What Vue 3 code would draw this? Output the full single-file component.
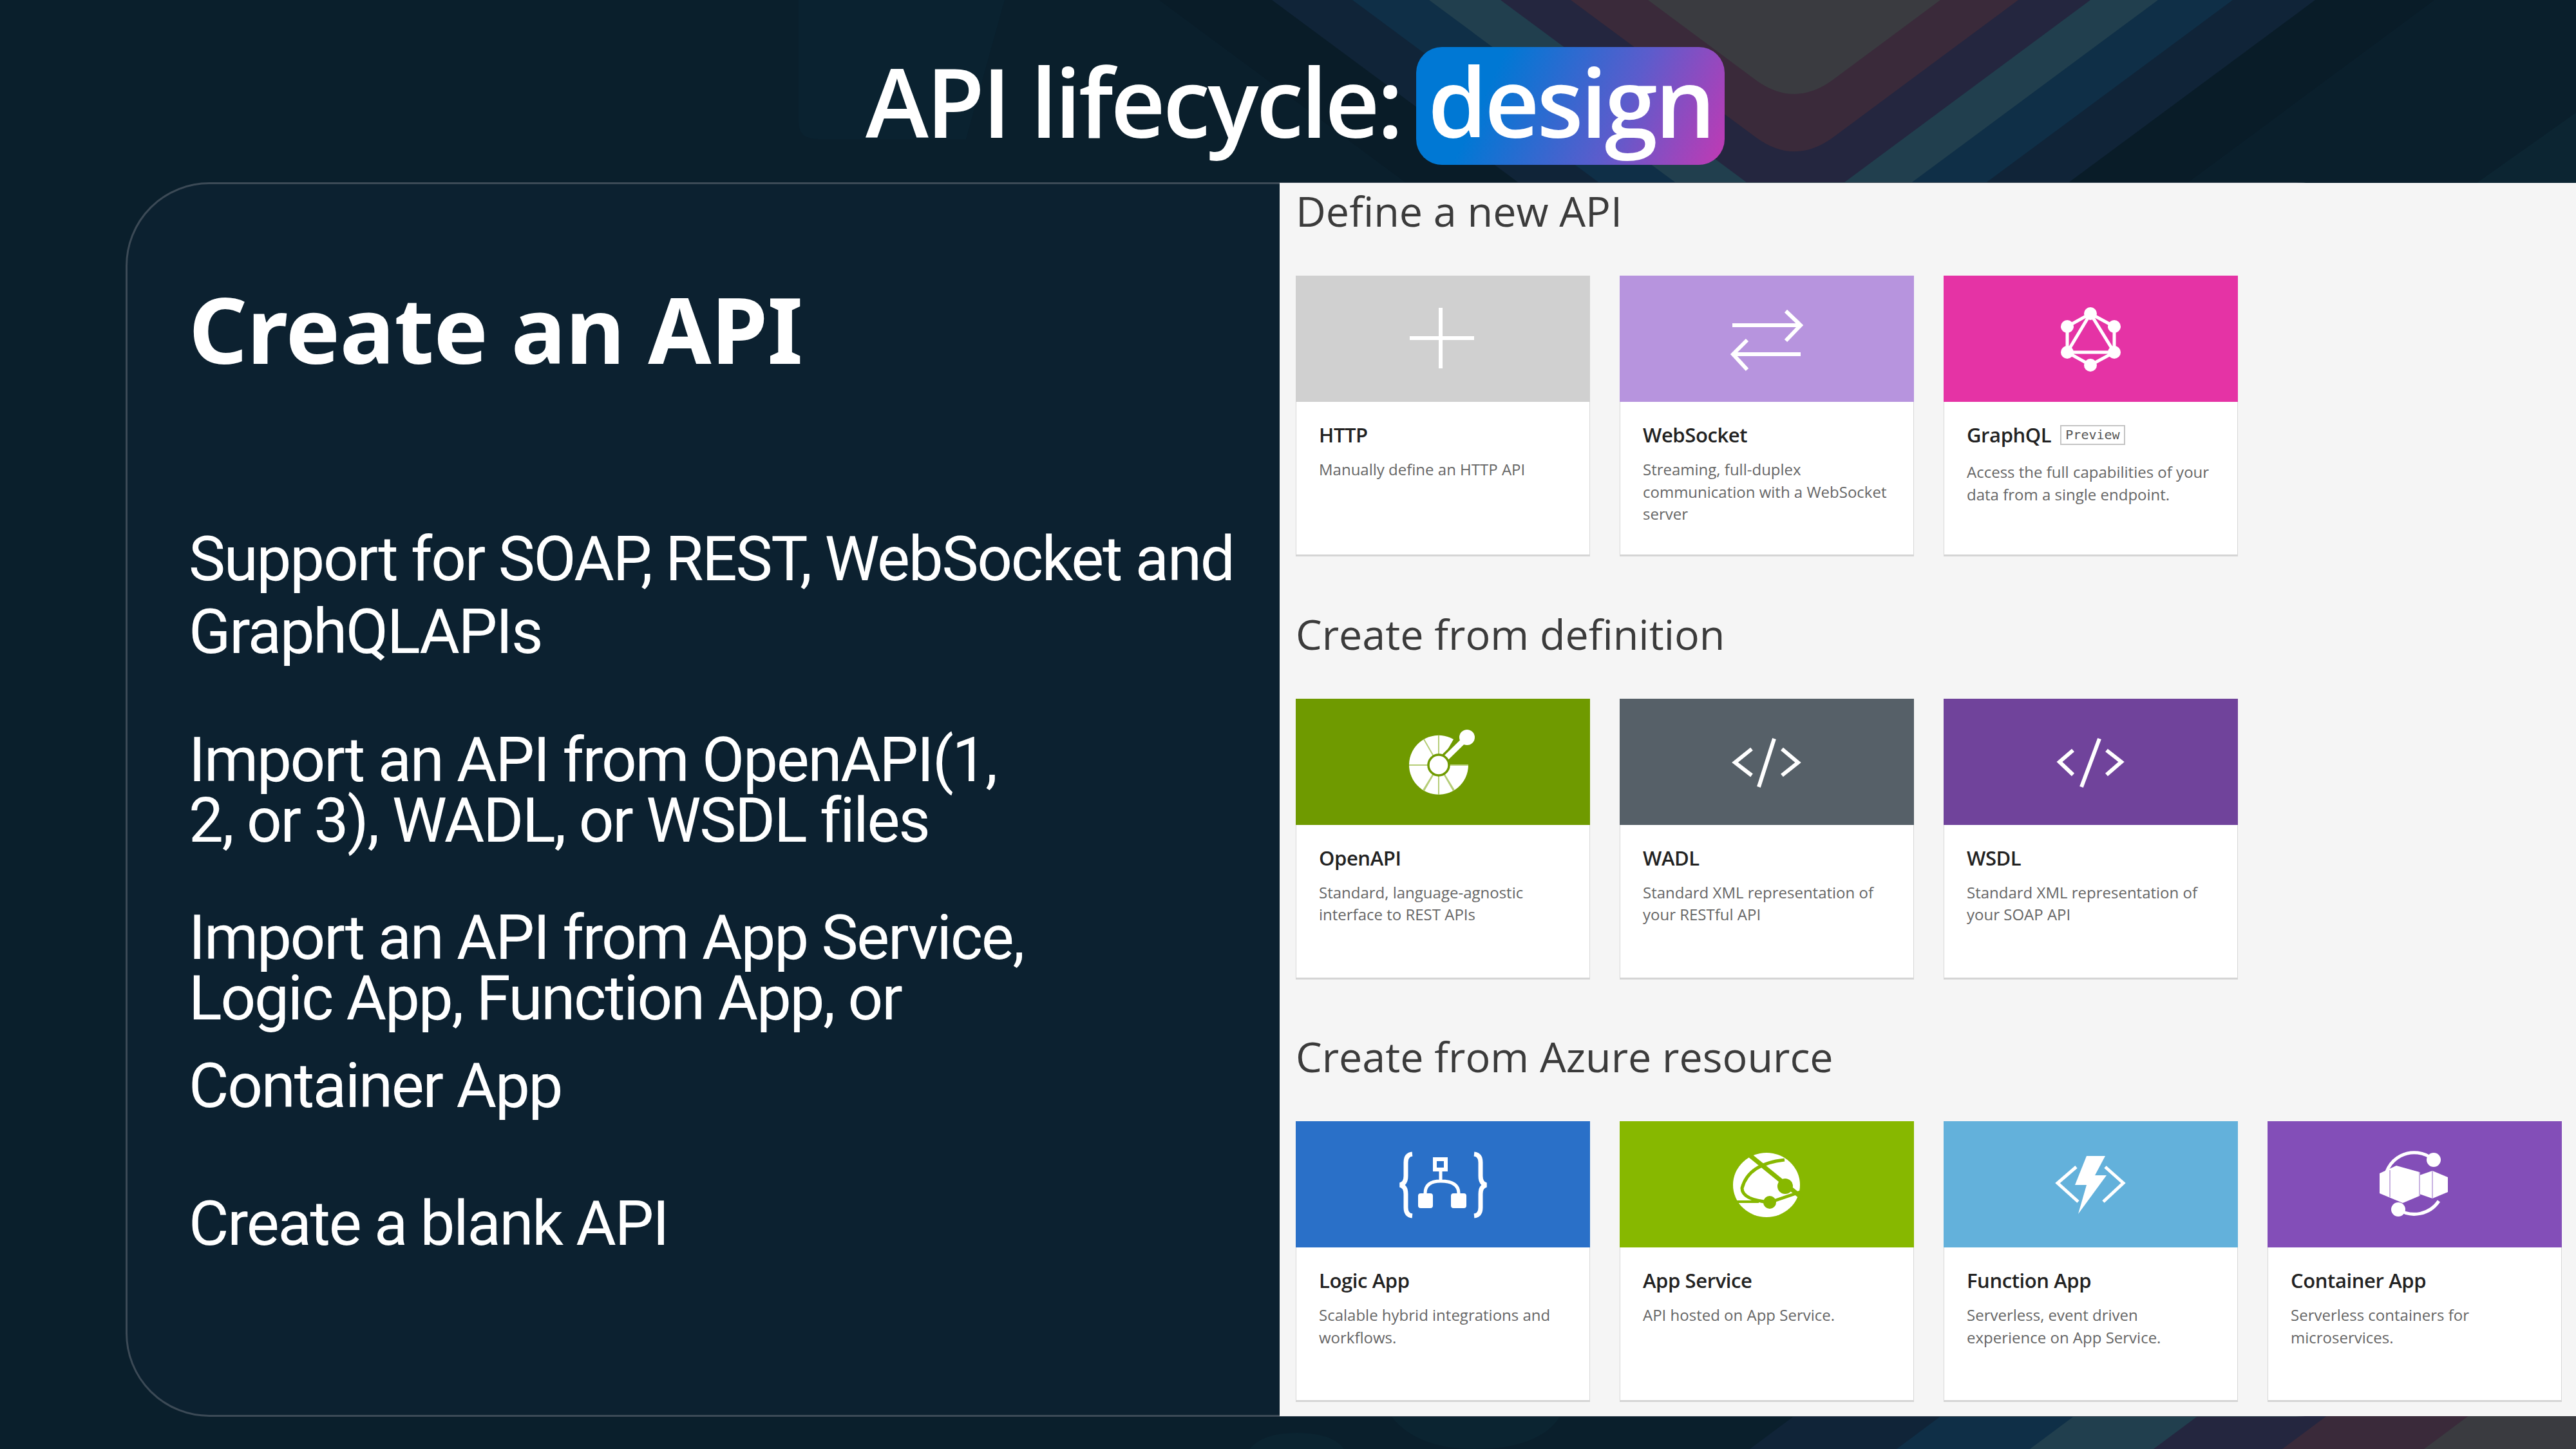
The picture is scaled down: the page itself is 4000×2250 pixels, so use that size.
<script setup>
const sections = [
  {
    title: 'Define a new API',
    cards: [
      { key: 'http', name: 'HTTP', color: '#d0d0d0', desc: 'Manually define an HTTP API' },
      { key: 'ws', name: 'WebSocket', color: '#b794de', desc: 'Streaming, full-duplex communication with a WebSocket server' },
      { key: 'graphql', name: 'GraphQL', color: '#e533a5', desc: 'Access the full capabilities of your data from a single endpoint.', badge: 'Preview' },
    ],
  },
  {
    title: 'Create from definition',
    cards: [
      { key: 'openapi', name: 'OpenAPI', color: '#6f9a00', desc: 'Standard, language-agnostic interface to REST APIs' },
      { key: 'wadl', name: 'WADL', color: '#566068', desc: 'Standard XML representation of your RESTful API' },
      { key: 'wsdl', name: 'WSDL', color: '#70439b', desc: 'Standard XML representation of your SOAP API' },
    ],
  },
  {
    title: 'Create from Azure resource',
    cards: [
      { key: 'logic', name: 'Logic App', color: '#2a70c8', desc: 'Scalable hybrid integrations and workflows.' },
      { key: 'appservice', name: 'App Service', color: '#87b800', desc: 'API hosted on App Service.' },
      { key: 'function', name: 'Function App', color: '#63b1db', desc: 'Serverless, event driven experience on App Service.' },
      { key: 'container', name: 'Container App', color: '#834eb8', desc: 'Serverless containers for microservices.' },
    ],
  },
]

// nested chevrons hanging from the top edge, outermost first
const topV = [
  { c: '#091c28', l: 1800, r: 3780 },
  { c: '#102438', l: 1975, r: 3595 },
  { c: '#0f2f47', l: 2100, r: 3467 },
  { c: '#213f4e', l: 2219, r: 3351 },
  { c: '#24263f', l: 2330, r: 3246 },
  { c: '#3a2a3a', l: 2439, r: 3134 },
  { c: '#3a3b40', l: 2559, r: 3013 },
]

const chevron = (v) => {
  const mid = (v.l + v.r) / 2
  const h = ((v.r - v.l) / 2) * 0.74
  return `M${v.l} 0L${mid - 60} ${h - 44}Q${mid} ${h} ${mid + 60} ${h - 44}L${v.r} 0Z`
}

const bottomV = [
  { c: '#102438', x: 2784 },
  { c: '#0f2f47', x: 3012 },
  { c: '#213f4e', x: 3219 },
  { c: '#24263f', x: 3411 },
  { c: '#3a2a3a', x: 3611 },
  { c: '#3a3b40', x: 3831 },
]
</script>

<template>
  <div class="slide">
    <svg class="backdrop" viewBox="0 0 4000 2250" width="4000" height="2250">
      <path d="M1240 0V190Q1240 216 1270 216H1500L1560 0Z" fill="#0a2230" />
      <path d="M4000 175L3846 284H4000Z" fill="#0c2532" />
      <path v-for="v in topV" :key="v.c" :fill="v.c" :d="chevron(v)" />
      <path d="M2161 2200Q2200 2250 2290 2250Q2390 2250 2422 2200Z" fill="#0b2431" />
      <path d="M1940 2250Q1960 2225 2013 2225Q2070 2225 2087 2250Z" fill="#0b2431" />
      <path
        v-for="v in bottomV"
        :key="v.x"
        :fill="v.c"
        :d="`M${v.x + 27} 2180L${v.x - 67} 2250L4000 2250L4000 2180Z`"
      />
    </svg>

    <h1 class="title">
      <span class="label">API lifecycle:</span>
      <span class="pill">design</span>
    </h1>

    <main class="panel">
      <section class="copy">
        <h2>Create an API</h2>
        <p class="first">Support for SOAP, REST, WebSocket and<br />GraphQLAPIs</p>
        <p class="second">Import an API from OpenAPI(1,<br />2, or 3), WADL, or WSDL files</p>
        <p class="third">Import an API from App Service,<br />Logic App, Function App, or</p>
        <p class="fourth">Container App</p>
        <p class="fifth">Create a blank API</p>
      </section>

      <section class="shot">
        <div v-for="s in sections" :key="s.title" class="group">
          <h3>{{ s.title }}</h3>
          <div class="cards">
            <article v-for="c in s.cards" :key="c.key" class="card">
              <div class="head" :style="{ background: c.color }">
                <svg class="icon" viewBox="0 0 457 196" width="457" height="196">
                  <g v-if="c.key === 'http'" stroke="#fff" stroke-width="6" fill="none">
                    <path d="M177 97H277M225 50V144" />
                  </g>
                  <g v-if="c.key === 'ws'" stroke="#fff" stroke-width="6" fill="none">
                    <path d="M175 77H280M258 55L281 77L258 101" />
                    <path d="M281 122H177M198 100L176 122L198 146" />
                  </g>
                  <g v-if="c.key === 'graphql'" fill="#fff">
                    <path d="M228 59L265 79V119L228 139L192 119V79ZL192 119H265Z" fill="none" stroke="#fff" stroke-width="5" />
                    <circle cx="228" cy="59" r="10" /><circle cx="265" cy="79" r="10" /><circle cx="265" cy="119" r="10" />
                    <circle cx="228" cy="139" r="10" /><circle cx="192" cy="119" r="10" /><circle cx="192" cy="79" r="10" />
                  </g>
                  <g v-if="c.key === 'openapi'">
                    <path d="M222 103L245 63A46 46 0 1 0 268 103Z" fill="#fff" />
                    <path d="M222 103L268 103M222 103L222 149M222 103L176 103M222 103L245 143M222 103L199 143M222 103L199 63M222 103L222 57M222 103L198 142M222 103L246 142" stroke="#b5cd77" stroke-width="2" />
                    <path d="M222 103L266 60" stroke="#6f9a00" stroke-width="16" />
                    <path d="M222 103L266 60" stroke="#fff" stroke-width="9" />
                    <circle cx="222" cy="103" r="16" fill="#fff" stroke="#6f9a00" stroke-width="3.5" />
                    <circle cx="266" cy="60" r="12" fill="#fff" />
                  </g>
                  <g v-if="c.key === 'wadl' || c.key === 'wsdl'" stroke="#fff" stroke-width="6" fill="none">
                    <path v-if="c.key === 'wadl'" d="M205 78L179 99L205 119M252 78L277 99L252 119M240 62L216 137" />
                    <path v-else d="M201 80L180 98L201 118M253 80L276 98L253 118M242 62L214 137" />
                  </g>
                  <g v-if="c.key === 'logic'" fill="none" stroke="#fff" stroke-width="7">
                    <path d="M181 51Q171 52 171 64V85Q171 97 162 99Q171 101 171 113V134Q171 146 181 147" />
                    <path d="M277 51Q287 52 287 64V85Q287 97 296 99Q287 101 287 113V134Q287 146 277 147" />
                    <rect x="216" y="59" width="17" height="16" stroke-width="6" />
                    <path d="M225 76V93M225 93Q201 93 201 112M225 93Q253 93 253 112" stroke-width="5" />
                    <rect x="190" y="112" width="23" height="23" rx="4" fill="#fff" stroke="none" />
                    <rect x="241" y="112" width="24" height="23" rx="4" fill="#fff" stroke="none" />
                  </g>
                  <g v-if="c.key === 'appservice'">
                    <ellipse cx="228" cy="99" rx="52" ry="50" fill="#fff" />
                    <g fill="none" stroke="#87b800">
                      <path d="M196 48L282 118" stroke-width="7" />
                      <path d="M256 60Q200 66 190 104Q190 122 233 126" stroke-width="5" />
                      <path d="M233 126L280 110" stroke-width="5" />
                      <path d="M180 125L216 125" stroke-width="4" />
                    </g>
                    <circle cx="257" cy="101" r="12" fill="#87b800" />
                    <circle cx="233" cy="126" r="10" fill="#87b800" />
                  </g>
                  <g v-if="c.key === 'function'">
                    <path d="M222 54H251L235 84H253L209 144L222 99H204Z" fill="#fff" />
                    <path d="M206 71L177 96L209 125M251 71L279 96L248 125" fill="none" stroke="#fff" stroke-width="5" />
                  </g>
                  <g v-if="c.key === 'container'">
                    <path d="M258 60A46 46 0 0 0 182 99M203 137A46 46 0 0 0 266 124" fill="none" stroke="#fff" stroke-width="5" />
                    <path d="M174 81L200 69L236 79V116L210 127L174 112Z" fill="#fff" />
                    <path d="M233 85L256 77L280 87V110L256 120L233 112Z" fill="#fff" />
                    <path d="M190 76V118M236 79V116M256 77V120" stroke="#c9b3e2" stroke-width="2" fill="none" />
                    <circle cx="258" cy="60" r="11" fill="#fff" />
                    <circle cx="203" cy="137" r="11" fill="#fff" />
                  </g>
                </svg>
              </div>
              <div class="body">
                <div class="name" :class="{ tagged: c.badge }">
                  {{ c.name }}<span v-if="c.badge" class="badge">{{ c.badge }}</span>
                </div>
                <p>{{ c.desc }}</p>
              </div>
            </article>
          </div>
        </div>
      </section>
    </main>
  </div>
</template>

<style scoped>
.slide {
  position: relative;
  width: 4000px;
  height: 2250px;
  overflow: hidden;
  background: #0a1f2c;
  color: #fff;
  font-family: "Noto Sans", "Open Sans", sans-serif;
}

.backdrop {
  position: absolute;
  left: 0;
  top: 0;
}

.title {
  position: relative;
  display: flex;
  justify-content: center;
  align-items: center;
  gap: 24px;
  height: 183px;
  margin: 0;
  padding: 73px 0 27px 22px;
  font-family: "Open Sans", sans-serif;
  font-weight: 600;
  font-size: 148px;
  letter-spacing: -4px;
  white-space: nowrap;
}

.label {
  padding-bottom: 16px;
}

.pill {
  display: flex;
  align-items: center;
  box-sizing: border-box;
  height: 183px;
  padding: 0 18px 16px;
  border-radius: 40px;
  background: linear-gradient(115deg, #0078d4 25%, #5c5ccc 65%, #c239b3 100%);
}

.panel {
  position: relative;
  display: flex;
  box-sizing: border-box;
  width: 3500px;
  height: 1917px;
  margin-left: 195px;
  background: #0c2130;
  border: 3px solid #3c4a56;
  border-radius: 130px;
}

.copy {
  flex: none;
  width: 1789px;
  padding: 139px 0 0 95px;
  box-sizing: border-box;
}

.copy h2 {
  margin: 0 0 217px;
  font-size: 142px;
  line-height: 170px;
  font-weight: 700;
  letter-spacing: -0.6px;
}

.copy p {
  margin: 0;
  font-family: Roboto, sans-serif;
  font-size: 96px;
  line-height: 94px;
  letter-spacing: -2.2px;
  white-space: nowrap;
}

.copy .first {
  line-height: 113px;
  margin-bottom: 95px;
}

.copy .second {
  margin-bottom: 88px;
}

.copy .third {
  margin-bottom: 42px;
}

.copy .fourth {
  margin-bottom: 120px;
}

.shot {
  flex: none;
  width: 2013px;
  height: 1915px;
  margin-top: -2px;
  padding: 0 0 0 25px;
  box-sizing: border-box;
  background: #f5f5f5;
  color: #3b3b3b;
}

.group {
  height: 656.5px;
  padding-top: 1px;
  box-sizing: border-box;
}

.group h3 {
  margin: 0;
  height: 143px;
  font-family: "Open Sans", sans-serif;
  font-weight: 400;
  font-size: 64.6px;
  line-height: 84px;
}

.cards {
  display: flex;
  gap: 46px;
}

.card {
  flex: none;
  width: 457px;
  height: 436px;
  box-sizing: border-box;
  background: #fff;
  border: 1px solid #d8d8d8;
  border-bottom: 3px solid #d5d5d5;
}

.head {
  height: 196px;
  margin: -1px -1px 0;
}

.icon {
  display: block;
}

.body {
  padding: 30px 32px 0 35px;
  font-family: "Open Sans", sans-serif;
}

.name {
  color: #222;
  font-size: 31px;
  font-weight: 600;
  line-height: 42px;
  letter-spacing: -0.4px;
}

.name.tagged {
  display: flex;
  align-items: center;
  gap: 14px;
  margin-bottom: 20px;
}

.badge {
  padding: 0 6px;
  height: 27px;
  border: 2px solid #c4c4c4;
  color: #555;
  font-family: "DejaVu Sans Mono", monospace;
  font-size: 20px;
  font-weight: 400;
  line-height: 27px;
  letter-spacing: 0;
}

.body p {
  margin: 16px 0 0;
  color: #666;
  font-size: 24px;
  line-height: 34.5px;
  letter-spacing: 0;
}
</style>

<style>
body {
  background: #0a1f2c;
}
</style>
